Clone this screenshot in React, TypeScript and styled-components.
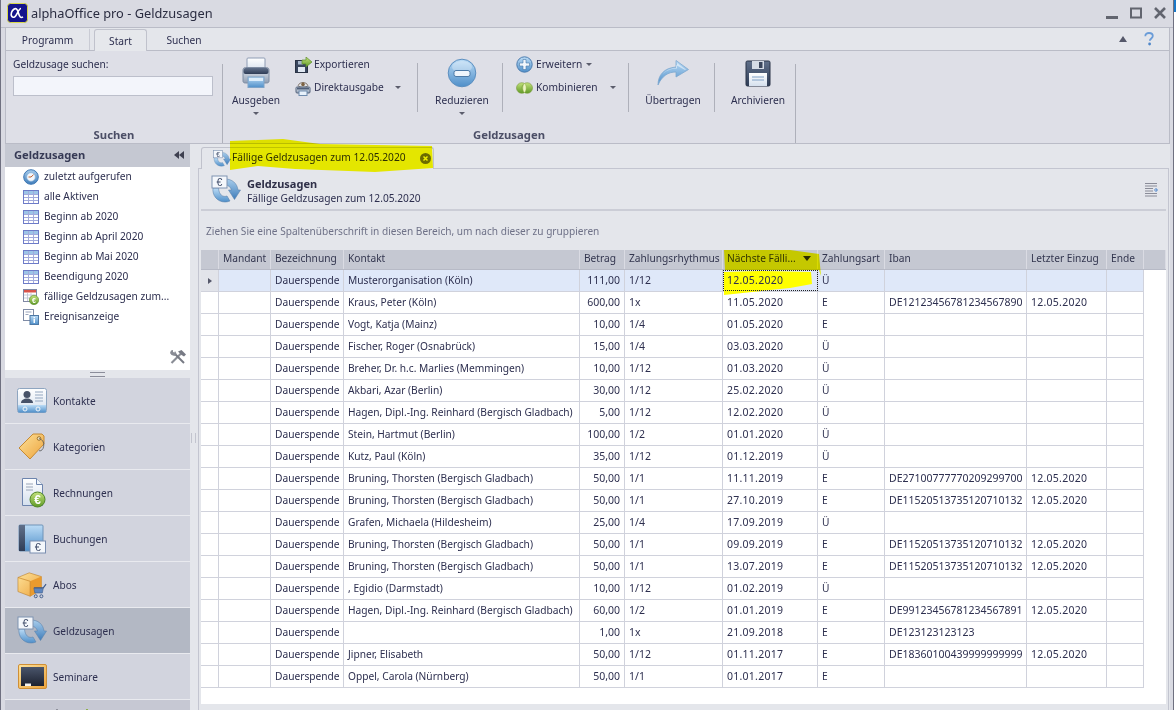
import React from "react";
import styled, { createGlobalStyle } from "styled-components";

const Global = createGlobalStyle`
  html, body { margin: 0; padding: 0; background: #fff; }
  #root { width: 1176px; height: 710px; overflow: hidden; }
  * { box-sizing: border-box; }
`;

const FONT = `"Noto Sans", "Liberation Sans", sans-serif`;
const INK = "#2d2f4f";

const Page = styled.div`
  position: relative;
  width: 1176px;
  height: 710px;
  overflow: hidden;
  display: flex;
  font-family: ${FONT};
  font-size: 10.2px;
  color: ${INK};
`;
const Win = styled.div`
  width: 1174px;
  height: 710px;
  background: #d9dae2;
  border-left: 1px solid #6f7080;
  border-right: 1px solid #6f7080;
  display: flex;
  flex-direction: column;
`;
const EdgeStrip = styled.div`
  width: 2px;
  background: linear-gradient(#1a78c8 0 12px, #fff 12px);
`;
const TitleBar = styled.div`
  height: 28px;
  flex: none;
  display: flex;
  align-items: center;
  padding: 0 7px 1px 6px;
  border-bottom: 1px solid #babcc7;
`;
const TitleText = styled.div`
  margin-left: 3px;
  font-size: 12.8px;
  color: #2a2c40;
  flex: 1;
`;
const WinControls = styled.div`
  display: flex;
  align-items: center;
  gap: 12px;
`;
const TabsBar = styled.div`
  height: 23px;
  flex: none;
  margin: 0 3px 0 4px;
  background: #e4e6eb;
  border-left: 1px solid #babcc7;
  border-right: 1px solid #babcc7;
  border-bottom: 1px solid #babcc7;
  display: flex;
  align-items: flex-end;
`;
const RibbonTab = styled.div<{ $w: number; $active?: boolean; $sep?: boolean }>`
  width: ${(p) => p.$w}px;
  height: ${(p) => (p.$active ? 22 : 21)}px;
  margin-bottom: ${(p) => (p.$active ? -1 : 0)}px;
  display: flex;
  align-items: center;
  justify-content: center;
  background: ${(p) => (p.$active ? "#e6e8ec" : "transparent")};
  border: ${(p) => (p.$active ? "1px solid #c0c2cc" : "none")};
  border-bottom: none;
  border-right: ${(p) => (p.$sep ? "1px solid #c9cbd4" : undefined)};
  border-radius: ${(p) => (p.$active ? "3px 3px 0 0" : "0")};
`;
const TabsRight = styled.div`
  margin-left: auto;
  align-self: center;
  display: flex;
  align-items: center;
  gap: 17px;
  padding-right: 15px;
`;
const Ribbon = styled.div`
  height: 93px;
  flex: none;
  margin: 0 3px 0 4px;
  background: #dedfe7;
  border-left: 1px solid #babcc7;
  border-right: 1px solid #babcc7;
  border-bottom: 1px solid #babcc7;
  display: flex;
`;
const Group = styled.div<{ $w: number }>`
  width: ${(p) => p.$w}px;
  flex: none;
  height: 92px;
  display: flex;
  flex-direction: column;
`;
const GroupEdge = styled.div`
  width: 1px;
  flex: none;
  height: 79px;
  margin-top: 13px;
  background: #aeb0ba;
`;
const GroupBody = styled.div`
  flex: 1;
  display: flex;
  min-height: 0;
`;
const GroupTitle = styled.div`
  height: 18px;
  flex: none;
  padding-top: 2px;
  text-align: center;
  font-weight: 700;
  color: #4b4e66;
  font-size: 11.3px;
  line-height: 16px;
`;
const SearchBody = styled.div`
  padding: 6px 7px 0;
  display: flex;
  flex-direction: column;
`;
const SearchLabel = styled.div`
  height: 15px;
  line-height: 15px;
`;
const SearchInput = styled.div`
  margin-top: 4px;
  width: 200px;
  height: 20px;
  background: #f3f5fb;
  border: 1px solid #bcbfcb;
`;
const BigButton = styled.div<{ $w: number; $pl?: number }>`
  width: ${(p) => p.$w}px;
  flex: none;
  padding-left: ${(p) => p.$pl ?? 0}px;
  display: flex;
  flex-direction: column;
  align-items: center;
  padding-top: 5px;
`;
const BigIcon = styled.div`
  height: 34px;
  display: flex;
  align-items: center;
  justify-content: center;
`;
const BigLabel = styled.div`
  margin-top: 2px;
  height: 16px;
  line-height: 16px;
  white-space: nowrap;
`;
const Caret = styled.span<{ $ml?: number; $dark?: boolean }>`
  display: inline-block;
  width: 0;
  height: 0;
  border-left: 3px solid transparent;
  border-right: 3px solid transparent;
  border-top: 3px solid ${(p) => (p.$dark ? "#2b2b30" : "#5b5d6c")};
  margin-left: ${(p) => p.$ml ?? 0}px;
`;
const BigCaret = styled(Caret)`
  margin-top: 4px;
`;
const SortCaret = styled.span`
  width: 0;
  height: 0;
  margin-right: 6px;
  border-left: 4px solid transparent;
  border-right: 4px solid transparent;
  border-top: 5px solid #2b2b30;
`;
const SmallColumn = styled.div<{ $w: number; $pl: number }>`
  width: ${(p) => p.$w}px;
  flex: none;
  padding-left: ${(p) => p.$pl}px;
  padding-top: 2px;
  display: flex;
  flex-direction: column;
`;
const SmallButton = styled.div<{ $gap: number }>`
  height: 23px;
  display: flex;
  align-items: center;
  white-space: nowrap;
  gap: ${(p) => p.$gap}px;
`;
const SmallLabel = styled.span`
  margin-bottom: 2px;
`;
const VSep = styled.div`
  width: 1px;
  flex: none;
  height: 49px;
  margin-top: 12px;
  background: #aeb0ba;
`;
const Content = styled.div`
  flex: 1;
  min-height: 0;
  margin: 0 3px 0 4px;
  display: flex;
`;
const Sidebar = styled.div`
  width: 185px;
  flex: none;
  background: #e4e6eb;
  display: flex;
  flex-direction: column;
  height: 566px;
  overflow: hidden;
`;
const SideHeader = styled.div`
  height: 23px;
  flex: none;
  background: #c5c8d2;
  display: flex;
  align-items: center;
  justify-content: space-between;
  padding: 0 6px 2px 9px;
  font-weight: 700;
  color: #363a55;
  font-size: 11.2px;
`;
const SideList = styled.div`
  height: 203px;
  flex: none;
  background: #fff;
  position: relative;
`;
const SideItem = styled.div`
  height: 20px;
  display: flex;
  align-items: center;
  padding-left: 18px;
  gap: 5px;
  white-space: nowrap;
`;
const SideLabel = styled.span`
  margin-bottom: 2px;
`;
const ToolsCorner = styled.div`
  position: absolute;
  right: 4px;
  bottom: 6px;
  line-height: 0;
`;
const Grip = styled.div`
  height: 8px;
  flex: none;
  display: flex;
  align-items: center;
  justify-content: center;
  &::before {
    content: "";
    width: 15px;
    height: 3px;
    border-top: 1px solid #8b8d9a;
    border-bottom: 1px solid #8b8d9a;
  }
`;
const NavItem = styled.div<{ $active?: boolean }>`
  height: 46px;
  flex: none;
  display: flex;
  align-items: center;
  padding-left: 12px;
  gap: 6px;
  background: ${(p) => (p.$active ? "#b3b8c4" : "#d2d4de")};
  border-bottom: 1px solid #e9eaef;
  font-size: 10.1px;
`;
const NavTail = styled.div`
  height: 11px;
  flex: none;
  background: #c6c8d3;
  padding: 8px 0 0 51px;
  line-height: 0;
`;
const NavIconBox = styled.div`
  width: 30px;
  height: 30px;
  display: flex;
  align-items: center;
  justify-content: center;
`;
const Splitter = styled.div`
  width: 7px;
  flex: none;
  background: #e4e6eb;
  display: flex;
  justify-content: center;
  &::before {
    content: "";
    margin-top: 289px;
    width: 3px;
    height: 10px;
    border-left: 1px solid #c2c4ce;
    border-right: 1px solid #c2c4ce;
  }
`;
const Main = styled.div`
  flex: 1;
  background: #e4e6eb;
  display: flex;
  flex-direction: column;
  min-width: 0;
  height: 566px;
`;
const DocStrip = styled.div`
  height: 24px;
  flex: none;
  padding: 3px 0 0 4px;
  position: relative;
  z-index: 1;
`;
const DocTab = styled.div`
  width: 233px;
  height: 22px;
  background: #e4e6eb;
  border: 1px solid #c0c2cc;
  border-bottom: none;
  border-radius: 3px 3px 0 0;
  display: flex;
  align-items: center;
  padding-left: 11px;
  white-space: nowrap;
`;
const DocTabText = styled.span`
  margin: 0 0 3px 1px;
  flex: 1;
`;
const DocClose = styled.span`
  width: 11px;
  height: 11px;
  margin-right: 2px;
  line-height: 0;
`;
const Panel = styled.div`
  flex: 1;
  margin: 0 1px;
  border: 1px solid #c3c5d0;
  border-bottom: none;
  padding: 2px 2px 0;
  display: flex;
  flex-direction: column;
  min-height: 0;
`;
const PanelHead = styled.div`
  height: 38px;
  flex: none;
  display: flex;
  align-items: center;
  padding: 0 8px 0 10px;
`;
const PanelHeadText = styled.div`
  margin-left: 6px;
  padding-top: 2px;
  flex: 1;
  line-height: 15px;
`;
const PanelTitle = styled.div`
  font-weight: 700;
  font-size: 11px;
  color: #2f3048;
`;
const GroupHint = styled.div`
  height: 41px;
  flex: none;
  border-top: 2px solid #cbcdd6;
  padding: 13px 0 0 5px;
  color: #6e7187;
  line-height: 15px;
  font-size: 10.1px;
`;
const Grid = styled.div`
  flex: none;
  height: 454px;
  background: #fff;
  display: flex;
  flex-direction: column;
`;
const COLS = "18px 52px 73px 236px 45px 98px 95px 67px 142px 80px 37px";
const HeadRow = styled.div`
  height: 20px;
  flex: none;
  display: grid;
  grid-template-columns: ${COLS} 1fr;
  background: #c5c8d2;
  border-bottom: 1px solid #b7bac6;
`;
const HeadCell = styled.div`
  border-right: 1px solid #dadbe3;
  padding: 0 0 2px 4px;
  line-height: 17px;
  white-space: nowrap;
  overflow: hidden;
  display: flex;
  align-items: center;
  justify-content: space-between;
  color: #33364f;
`;
const Row = styled.div<{ $selected?: boolean }>`
  height: 22px;
  flex: none;
  width: 943px;
  display: grid;
  grid-template-columns: ${COLS};
  background: ${(p) => (p.$selected ? "#dfe8f9" : "#fff")};
  border-bottom: 1px solid #d0d2dc;
  border-right: 1px solid #d0d2dc;
`;
const Cell = styled.div<{ $right?: boolean }>`
  border-right: 1px solid #d0d2dc;
  padding: 0 ${(p) => (p.$right ? 4 : 0)}px 0 4px;
  line-height: 20px;
  white-space: nowrap;
  overflow: hidden;
  text-align: ${(p) => (p.$right ? "right" : "left")};
`;
const NumCell = styled(Cell)`
  font-size: 10.5px;
`;
const DateCell = styled(Cell)<{ $focus?: boolean }>`
  font-size: 10.5px;
  letter-spacing: 0.25px;
  position: relative;
  z-index: ${(p) => (p.$focus ? 3 : "auto")};
  outline: ${(p) => (p.$focus ? "1px dotted #222" : "none")};
  outline-offset: -1px;
`;
const Indicator = styled.div<{ $selected?: boolean }>`
  border-right: 1px solid #d0d2dc;
  background: ${(p) => (p.$selected ? "#e2e4ea" : "#fff")};
  display: flex;
  align-items: center;
  justify-content: center;
  &::before {
    content: "";
    display: ${(p) => (p.$selected ? "block" : "none")};
    border-top: 3px solid transparent;
    border-bottom: 3px solid transparent;
    border-left: 4px solid #55586a;
  }
`;
const MarkerLayer = styled.svg<{ $blend?: boolean; $z: number }>`
  position: absolute;
  left: 0;
  top: 0;
  width: 1176px;
  height: 710px;
  pointer-events: none;
  z-index: ${(p) => p.$z};
  mix-blend-mode: ${(p) => (p.$blend ? "multiply" : "normal")};
`;
const DefsHolder = styled.svg`
  position: absolute;
  width: 0;
  height: 0;
`;

const Defs = () => (
  <DefsHolder aria-hidden>
    <defs>
      <linearGradient id="gBlue" x1="0" y1="0" x2="0" y2="1">
        <stop offset="0" stopColor="#bcdcf6" />
        <stop offset="1" stopColor="#4f8fc9" />
      </linearGradient>
      <linearGradient id="gBlueDeep" x1="0" y1="0" x2="0" y2="1">
        <stop offset="0" stopColor="#a8cdec" />
        <stop offset="1" stopColor="#3f7dba" />
      </linearGradient>
      <linearGradient id="gGreen" x1="0" y1="0" x2="0" y2="1">
        <stop offset="0" stopColor="#c4e27c" />
        <stop offset="1" stopColor="#5f9a26" />
      </linearGradient>
      <linearGradient id="gGold" x1="0" y1="0" x2="1" y2="1">
        <stop offset="0" stopColor="#fde29a" />
        <stop offset="1" stopColor="#eda33c" />
      </linearGradient>
      <linearGradient id="gNavy" x1="0" y1="0" x2="0" y2="1">
        <stop offset="0" stopColor="#60708a" />
        <stop offset="1" stopColor="#2f3d57" />
      </linearGradient>
      <linearGradient id="gPaper" x1="0" y1="0" x2="0" y2="1">
        <stop offset="0" stopColor="#ffffff" />
        <stop offset="1" stopColor="#d5e0ee" />
      </linearGradient>
      <linearGradient id="gSlate" x1="0" y1="0" x2="0" y2="1">
        <stop offset="0" stopColor="#e8edf4" />
        <stop offset="1" stopColor="#8f9db2" />
      </linearGradient>
      <linearGradient id="gBoard" x1="0" y1="0" x2="0" y2="1">
        <stop offset="0" stopColor="#4a556b" />
        <stop offset="1" stopColor="#1d2230" />
      </linearGradient>
    </defs>
  </DefsHolder>
);

const Logo = () => (
  <svg width="21" height="20" viewBox="0 0 21 20">
    <rect x="0.5" y="0.5" width="20" height="19" rx="3" fill="#14148c" stroke="#d8d84a" />
    <path d="M14 5.5c-2.5 0-4 7.5-6.5 8.5C5 15 3.5 12.5 4.5 9.5 5.5 6.5 8 5 9.5 6c1.8 1.2 1.8 6 3.8 8 .6.6 1.7.5 2.7-.2" fill="none" stroke="#fff" strokeWidth="1.6" />
  </svg>
);
const WinMin = () => (
  <svg width="12" height="14" viewBox="0 0 12 14"><rect x="0" y="10" width="12" height="3" fill="#62656f" /></svg>
);
const WinMax = () => (
  <svg width="12" height="12" viewBox="0 0 12 12"><rect x="1" y="1.5" width="10" height="9" fill="none" stroke="#62656f" strokeWidth="2" /></svg>
);
const WinClose = () => (
  <svg width="12" height="12" viewBox="0 0 12 12"><path d="M1 1l10 10M11 1L1 11" stroke="#62656f" strokeWidth="2.6" /></svg>
);
const CollapseUp = () => (
  <svg width="8" height="6" viewBox="0 0 8 6"><path d="M0 6L4 0l4 6z" fill="#55586a" /></svg>
);
const Help = () => (
  <svg width="10" height="14" viewBox="0 0 10 14">
    <path d="M1.3 4.2C1.3 2 3 1 5 1s3.800 1 3.800 3c0 2.300-3 2.600-3 4.800" fill="none" stroke="#6a9cd8" strokeWidth="1.800" />
    <circle cx="5.600" cy="12" r="1.400" fill="#4f86c8" />
  </svg>
);
const Printer = () => (
  <svg width="32" height="32" viewBox="0 0 32 32">
    <rect x="7" y="1" width="18" height="13" rx="1" fill="url(#gPaper)" stroke="#8e9cb4" />
    <path d="M3 13c0-1.500 1-2.500 2.500-2.500h21c1.500 0 2.500 1 2.500 2.500v11c0 1.500-1 2-2.500 2h-21C4 26 3 25.500 3 24z" fill="url(#gSlate)" stroke="#7f8da3" />
    <rect x="3.500" y="11" width="25" height="6" rx="2" fill="url(#gNavy)" />
    <rect x="8" y="20" width="16" height="10.500" fill="url(#gBlue)" stroke="#7ea3c8" />
    <rect x="9" y="21" width="14" height="3" fill="#dcedfb" />
  </svg>
);
const ExportIcon = () => (
  <svg width="17" height="16" viewBox="0 0 17 16">
    <rect x="0.500" y="3.500" width="12" height="12" fill="#39465e" stroke="#2a3345" />
    <rect x="3" y="10" width="7" height="5" fill="#dfe7f1" />
    <rect x="3" y="4" width="5" height="3.500" fill="#a9b8cc" />
    <path d="M7 3h4V0l6 5-6 5V7H7z" fill="url(#gGreen)" stroke="#5d8e2b" strokeWidth="0.700" />
  </svg>
);
const DirectIcon = () => (
  <svg width="16" height="16" viewBox="0 0 16 16">
    <path d="M3 5.500C5 1.500 11 1.500 13 5.500 11 8 5 8 3 5.500z" fill="#e2e4e8" stroke="#6c5c4c" strokeWidth="0.800" />
    <circle cx="8" cy="4.400" r="1.800" fill="#7d6242" />
    <rect x="1" y="7" width="14" height="6" rx="1" fill="url(#gSlate)" stroke="#55647d" />
    <rect x="2" y="7.500" width="12" height="2" fill="#4f5e79" />
    <rect x="4" y="11" width="8" height="4.500" fill="#e7f1fb" stroke="#6e8bad" />
  </svg>
);
const MinusCircle = () => (
  <svg width="30" height="30" viewBox="0 0 30 30">
    <circle cx="15" cy="15" r="13.800" fill="url(#gBlue)" stroke="#5c8fc0" />
    <ellipse cx="15" cy="9" rx="10" ry="6" fill="#fff" opacity="0.300" />
    <rect x="7" y="12.500" width="16" height="6" rx="2" fill="#eef5fc" stroke="#4d7aa7" />
  </svg>
);
const PlusCircle = () => (
  <svg width="17" height="17" viewBox="0 0 17 17">
    <circle cx="8.500" cy="8.500" r="7.700" fill="url(#gBlue)" stroke="#4d7db0" />
    <path d="M7 3.500h3V7h3.500v3H10v3.500H7V10H3.500V7H7z" fill="#f2f7fc" stroke="#4a78a8" strokeWidth="0.600" />
  </svg>
);
const Combine = () => (
  <svg width="17" height="12" viewBox="0 0 17 12">
    <circle cx="5.800" cy="6" r="5.300" fill="url(#gGreen)" stroke="#7b9a3c" strokeWidth="0.600" />
    <circle cx="11.200" cy="6" r="5.300" fill="url(#gGreen)" stroke="#7b9a3c" strokeWidth="0.600" />
    <path d="M8.500 1.300c2.300 2.500 2.300 6.900 0 9.400-2.300-2.500-2.300-6.900 0-9.400z" fill="#eef5c4" stroke="#8fae4a" strokeWidth="0.500" />
  </svg>
);
const Share = () => (
  <svg width="32" height="26" viewBox="0 0 32 26">
    <path d="M1 25C1 15 7 8 19 7V0.500L31.500 9.500 19 17v-5C11 12 5 16 1 25z" fill="url(#gBlue)" stroke="#7ea8cf" strokeWidth="0.800" />
    <path d="M3 19C6 12 11 9 20 8.500V3l9 6.500-1 .500L19 5v3C11 8.500 6 12 3 19z" fill="#fff" opacity="0.500" />
  </svg>
);
const Floppy = () => (
  <svg width="26" height="27" viewBox="0 0 26 27">
    <path d="M1 2.500C1 1.500 1.500 1 2.500 1h21c1 0 1.500.5 1.500 1.500v22c0 1-.5 1.500-1.500 1.500h-21c-1 0-1.500-.5-1.500-1.500z" fill="url(#gNavy)" stroke="#2a3448" />
    <rect x="7" y="1" width="12" height="8" fill="#d5dce6" />
    <rect x="14" y="2" width="3.500" height="6" fill="#3a465c" />
    <rect x="4" y="13" width="18" height="13" fill="url(#gPaper)" />
    <path d="M7 17h12M7 20h12" stroke="#7fa0c6" strokeWidth="1" />
  </svg>
);
const GridIcon = () => (
  <svg width="16" height="14" viewBox="0 0 16 14">
    <rect x="0.500" y="0.500" width="15" height="13" fill="#fff" stroke="#6d7bc8" />
    <rect x="1" y="1" width="14" height="3" fill="#9cc4e8" />
    <path d="M5.500 1v12M10.500 1v12M1 4.500h14M1 7.500h14M1 10.500h14" stroke="#a3abdc" strokeWidth="1" />
  </svg>
);
const ClockGlobe = () => (
  <svg width="16" height="16" viewBox="0 0 16 16">
    <circle cx="8" cy="8" r="7.300" fill="url(#gBlueDeep)" stroke="#3f78b4" />
    <circle cx="8" cy="8" r="4.300" fill="#f2f7fc" stroke="#8ab2d8" strokeWidth="0.700" />
    <path d="M8 8l2.500-2.300M8 8H5.500" stroke="#c06030" strokeWidth="1" />
  </svg>
);
const CalendarEuro = () => (
  <svg width="16" height="16" viewBox="0 0 16 16">
    <rect x="0.500" y="0.500" width="13" height="12" fill="#fff" stroke="#8088a4" />
    <rect x="1" y="1" width="12" height="2.500" fill="#d9534a" />
    <path d="M1 6h12M1 9h12M4.500 4v8M8 4v8" stroke="#b9bfd2" strokeWidth="0.800" />
    <circle cx="11" cy="11" r="4.700" fill="url(#gGreen)" stroke="#55862a" strokeWidth="0.600" />
    <text x="11" y="13.500" fontSize="7" fontFamily="Liberation Sans" fontWeight="700" textAnchor="middle" fill="#fff">€</text>
  </svg>
);
const EventIcon = () => (
  <svg width="16" height="16" viewBox="0 0 16 16">
    <rect x="0.500" y="0.500" width="10" height="11" fill="#fff" stroke="#7f8ba5" />
    <path d="M2.500 3h6M2.500 5.500h3" stroke="#9aa5bc" />
    <rect x="7" y="6.500" width="8.500" height="9" fill="url(#gBlue)" stroke="#4e79a6" />
    <rect x="10.500" y="8" width="1.500" height="1.300" fill="#fff" />
    <rect x="10.500" y="10" width="1.500" height="4" fill="#fff" />
  </svg>
);
const Tools = () => (
  <svg width="16" height="14" viewBox="0 0 16 14">
    <path d="M1.500 13L11 3.500" stroke="#8a8d96" strokeWidth="2.200" />
    <path d="M8 1.500L11.500 0 16 4.500 14 6.500 11.500 5 10 3.500z" fill="#777a84" />
    <path d="M14 13L5 4" stroke="#777a84" strokeWidth="2" />
    <path d="M1 .5L3 0 3 2 4.500 2.500 5 1 6.500 3.500 4.500 6 1.500 5 0 3z" fill="#8a8d96" />
  </svg>
);
const CollapseLeft = () => (
  <svg width="10" height="8" viewBox="0 0 10 8"><path d="M5 0L0 4l5 4zM10 0L5 4l5 4z" fill="#3e4050" /></svg>
);
const ContactIcon = () => (
  <svg width="30" height="25" viewBox="0 0 30 25">
    <rect x="0.500" y="0.500" width="29" height="24" rx="2" fill="url(#gPaper)" stroke="#8ea5c0" />
    <path d="M1 17h28v6c0 1-.5 1.500-1.500 1.500h-25C1.500 24.500 1 24 1 23z" fill="url(#gBlue)" />
    <circle cx="10" cy="6.500" r="3.500" fill="#475268" />
    <path d="M4 15c0-3 3-4.500 6-4.500s6 1.500 6 4.500z" fill="#475268" />
    <path d="M18 4h8M18 7h8M18 10h8M18 13h8" stroke="#93a6bf" strokeWidth="1" />
    <circle cx="8" cy="21" r="2" fill="none" stroke="#f2f6fa" />
    <circle cx="21" cy="21" r="2" fill="none" stroke="#f2f6fa" />
  </svg>
);
const TagIcon = () => (
  <svg width="28" height="27" viewBox="0 0 28 27">
    <path d="M1 15L15 1l9 0 2 2 0 8L12 26z" fill="url(#gGold)" stroke="#c58a34" />
    <circle cx="21" cy="5.500" r="1.800" fill="#f2e4c0" stroke="#9a7430" />
    <path d="M21 5.500c4 1 6 5 4 10-1 2-3 3-4 2" fill="none" stroke="#555" strokeWidth="0.800" />
  </svg>
);
const InvoiceIcon = () => (
  <svg width="27" height="30" viewBox="0 0 27 30">
    <path d="M3.500.5h14l6 6v21h-20z" fill="url(#gPaper)" stroke="#6d84ad" />
    <path d="M17.500.5v6h6" fill="#eef3f9" stroke="#6d84ad" />
    <path d="M7 6h7M7 9h7M7 12h7" stroke="#9aa5b8" />
    <circle cx="18.500" cy="21.500" r="7.500" fill="url(#gGreen)" stroke="#4f8526" />
    <text x="18.500" y="26" fontSize="12" fontFamily="Liberation Sans" fontWeight="700" textAnchor="middle" fill="#fff">€</text>
  </svg>
);
const BookIcon = () => (
  <svg width="28" height="30" viewBox="0 0 28 30">
    <rect x="1" y="1" width="24" height="26" rx="1" fill="url(#gBlue)" stroke="#6f93b8" />
    <rect x="1" y="1" width="6" height="26" fill="url(#gNavy)" />
    <rect x="12" y="17" width="15.500" height="12" fill="#f4f7fb" stroke="#7a8eb0" />
    <text x="19.700" y="27" fontSize="11" fontFamily="Liberation Sans" textAnchor="middle" fill="#3d4a68">€</text>
  </svg>
);
const BoxCartIcon = () => (
  <svg width="32" height="30" viewBox="0 0 32 30">
    <path d="M1 7l12-5 13 4v14l-12 7-13-5z" fill="url(#gGold)" stroke="#b77a24" strokeWidth="0.600" />
    <path d="M14 11L26 6v14l-12 7z" fill="#e99a2e" />
    <path d="M1 7l13 4v16" fill="none" stroke="#c98a30" strokeWidth="0.800" />
    <path d="M18 18h10l3-4" fill="none" stroke="#3d5a8a" strokeWidth="1.200" />
    <path d="M18 18.500h10l-1 5h-8z" fill="#5d86bf" stroke="#3d5a8a" strokeWidth="0.600" />
    <circle cx="20" cy="27" r="1.600" fill="none" stroke="#3d5a8a" />
    <circle cx="26" cy="27" r="1.600" fill="none" stroke="#3d5a8a" />
  </svg>
);
const RefundIcon = ({ size = 30 }: { size?: number }) => (
  <svg width={size} height={size} viewBox="0 0 30 30">
    <path d="M14 4c7 0 12 4 13 11h2.500l-6 9.500-6-9.500h3c-1-3-3-5-6.500-5z" fill="url(#gBlueDeep)" stroke="#5a83ac" strokeWidth="0.600" />
    <path d="M2 13c-1 7 4 14 12 14 2 0 3.500-.5 5-1l-3-5c-4 1.500-8-1-8.500-8z" fill="url(#gBlue)" stroke="#5a83ac" strokeWidth="0.600" />
    <rect x="1" y="1" width="15" height="12" fill="#f4f7fb" stroke="#7f93b2" />
    <text x="8.500" y="11" fontSize="10.500" fontFamily="Liberation Sans" textAnchor="middle" fill="#3d4a68">€</text>
  </svg>
);
const BoardIcon = () => (
  <svg width="29" height="25" viewBox="0 0 29 25">
    <rect x="0.500" y="0.500" width="28" height="24" rx="1.500" fill="url(#gGold)" stroke="#cf8f36" />
    <rect x="3" y="3" width="23" height="19" fill="url(#gBoard)" />
    <rect x="7" y="19.500" width="6" height="2.500" fill="#f2f2f2" />
  </svg>
);
const TailIconTips = () => (
  <svg width="32" height="3" viewBox="0 0 32 3">
    <rect x="0" y="0" width="2" height="3" fill="#8f919c" />
    <rect x="30" y="0" width="2" height="3" fill="#8cb04a" />
  </svg>
);
const ColumnsIcon = () => (
  <svg width="13" height="14" viewBox="0 0 13 14">
    <path d="M0 .5h12M0 3h12M0 5.500h8M0 8h8M0 10.500h12M0 13h12" stroke="#8a8c98" strokeWidth="1" />
    <path d="M9 7h3M10.500 5l2 2-2 2" fill="none" stroke="#4f86cc" strokeWidth="1" />
  </svg>
);
const CloseGlyph = () => (
  <svg width="11" height="11" viewBox="0 0 11 11">
    <circle cx="5.500" cy="5.500" r="5.500" fill="#6c6c6c" />
    <path d="M3.500 3.500l4 4M7.500 3.500l-4 4" stroke="#f0f0f0" strokeWidth="1.500" />
  </svg>
);

const sideItems: [React.ReactNode, string][] = [
  [<ClockGlobe />, "zuletzt aufgerufen"],
  [<GridIcon />, "alle Aktiven"],
  [<GridIcon />, "Beginn ab 2020"],
  [<GridIcon />, "Beginn ab April 2020"],
  [<GridIcon />, "Beginn ab Mai 2020"],
  [<GridIcon />, "Beendigung 2020"],
  [<CalendarEuro />, "fällige Geldzusagen zum..."],
  [<EventIcon />, "Ereignisanzeige"],
];
const navItems: [React.ReactNode, string][] = [
  [<ContactIcon />, "Kontakte"],
  [<TagIcon />, "Kategorien"],
  [<InvoiceIcon />, "Rechnungen"],
  [<BookIcon />, "Buchungen"],
  [<BoxCartIcon />, "Abos"],
  [<RefundIcon />, "Geldzusagen"],
  [<BoardIcon />, "Seminare"],
];

const headers = ["", "Mandant", "Bezeichnung", "Kontakt", "Betrag", "Zahlungsrhythmus", "Nächste Fälli...", "Zahlungsart", "Iban", "Letzter Einzug", "Ende"];
const B = "Bruning, Thorsten (Bergisch Gladbach)";
const H = "Hagen, Dipl.-Ing. Reinhard (Bergisch Gladbach)";
const rows: [string, string, string, string, string, string, string][] = [
  ["Musterorganisation (Köln)", "111,00", "1/12", "12.05.2020", "Ü", "", ""],
  ["Kraus, Peter (Köln)", "600,00", "1x", "11.05.2020", "E", "DE12123456781234567890", "12.05.2020"],
  ["Vogt, Katja (Mainz)", "10,00", "1/4", "01.05.2020", "E", "", ""],
  ["Fischer, Roger (Osnabrück)", "15,00", "1/4", "03.03.2020", "Ü", "", ""],
  ["Breher, Dr. h.c. Marlies (Memmingen)", "10,00", "1/12", "01.03.2020", "Ü", "", ""],
  ["Akbari, Azar (Berlin)", "30,00", "1/12", "25.02.2020", "Ü", "", ""],
  [H, "5,00", "1/12", "12.02.2020", "Ü", "", ""],
  ["Stein, Hartmut (Berlin)", "100,00", "1/2", "01.01.2020", "Ü", "", ""],
  ["Kutz, Paul (Köln)", "35,00", "1/12", "01.12.2019", "Ü", "", ""],
  [B, "50,00", "1/1", "11.11.2019", "E", "DE27100777770209299700", "12.05.2020"],
  [B, "50,00", "1/1", "27.10.2019", "E", "DE11520513735120710132", "12.05.2020"],
  ["Grafen, Michaela (Hildesheim)", "25,00", "1/4", "17.09.2019", "Ü", "", ""],
  [B, "50,00", "1/1", "09.09.2019", "E", "DE11520513735120710132", "12.05.2020"],
  [B, "50,00", "1/1", "13.07.2019", "E", "DE11520513735120710132", "12.05.2020"],
  [", Egidio (Darmstadt)", "10,00", "1/12", "01.02.2019", "Ü", "", ""],
  [H, "60,00", "1/2", "01.01.2019", "E", "DE99123456781234567891", "12.05.2020"],
  ["", "1,00", "1x", "21.09.2018", "E", "DE123123123123", ""],
  ["Jipner, Elisabeth", "50,00", "1/12", "01.11.2017", "E", "DE18360100439999999999", "12.05.2020"],
  ["Oppel, Carola (Nürnberg)", "50,00", "1/1", "01.01.2017", "E", "", ""],
];

export default function App() {
  return (
    <Page>
      <Global />
      <Defs />
      <Win>
        <TitleBar>
          <Logo />
          <TitleText>alphaOffice pro - Geldzusagen</TitleText>
          <WinControls>
            <WinMin />
            <WinMax />
            <WinClose />
          </WinControls>
        </TitleBar>
        <TabsBar>
          <RibbonTab $w={84} $sep>Programm</RibbonTab>
          <RibbonTab $w={4} />
          <RibbonTab $w={53} $active>Start</RibbonTab>
          <RibbonTab $w={74}>Suchen</RibbonTab>
          <TabsRight>
            <CollapseUp />
            <Help />
          </TabsRight>
        </TabsBar>
        <Ribbon>
          <Group $w={216}>
            <GroupBody>
              <SearchBody>
                <SearchLabel>Geldzusage suchen:</SearchLabel>
                <SearchInput />
              </SearchBody>
            </GroupBody>
            <GroupTitle>Suchen</GroupTitle>
          </Group>
          <GroupEdge />
          <Group $w={572}>
            <GroupBody>
              <BigButton $w={66}>
                <BigIcon><Printer /></BigIcon>
                <BigLabel>Ausgeben</BigLabel>
                <BigCaret />
              </BigButton>
              <SmallColumn $w={128} $pl={6}>
                <SmallButton $gap={2}><ExportIcon /><SmallLabel>Exportieren</SmallLabel></SmallButton>
                <SmallButton $gap={3}><DirectIcon /><SmallLabel>Direktausgabe</SmallLabel><Caret $ml={8} /></SmallButton>
              </SmallColumn>
              <VSep />
              <BigButton $w={84} $pl={4}>
                <BigIcon><MinusCircle /></BigIcon>
                <BigLabel>Reduzieren</BigLabel>
                <BigCaret />
              </BigButton>
              <VSep />
              <SmallColumn $w={125} $pl={13}>
                <SmallButton $gap={3}><PlusCircle /><SmallLabel>Erweitern</SmallLabel><Caret $ml={1} /></SmallButton>
                <SmallButton $gap={3}><Combine /><SmallLabel>Kombinieren</SmallLabel><Caret $ml={9} /></SmallButton>
              </SmallColumn>
              <VSep />
              <BigButton $w={85} $pl={3}>
                <BigIcon><Share /></BigIcon>
                <BigLabel>Übertragen</BigLabel>
              </BigButton>
              <VSep />
              <BigButton $w={80} $pl={6}>
                <BigIcon><Floppy /></BigIcon>
                <BigLabel>Archivieren</BigLabel>
              </BigButton>
            </GroupBody>
            <GroupTitle>Geldzusagen</GroupTitle>
          </Group>
          <GroupEdge />
        </Ribbon>
        <Content>
          <Sidebar>
            <SideHeader>
              Geldzusagen
              <CollapseLeft />
            </SideHeader>
            <SideList>
              {sideItems.map(([icon, label]) => (
                <SideItem key={label}>{icon}<SideLabel>{label}</SideLabel></SideItem>
              ))}
              <ToolsCorner><Tools /></ToolsCorner>
            </SideList>
            <Grip />
            {navItems.map(([icon, label]) => (
              <NavItem key={label} $active={label === "Geldzusagen"}>
                <NavIconBox>{icon}</NavIconBox>
                {label}
              </NavItem>
            ))}
            <NavTail><TailIconTips /></NavTail>
          </Sidebar>
          <Splitter />
          <Main>
            <DocStrip>
              <DocTab>
                <RefundIcon size={18} />
                <DocTabText>Fällige Geldzusagen zum 12.05.2020</DocTabText>
                <DocClose><CloseGlyph /></DocClose>
              </DocTab>
            </DocStrip>
            <Panel>
              <PanelHead>
                <RefundIcon />
                <PanelHeadText>
                  <PanelTitle>Geldzusagen</PanelTitle>
                  Fällige Geldzusagen zum 12.05.2020
                </PanelHeadText>
                <ColumnsIcon />
              </PanelHead>
              <GroupHint>Ziehen Sie eine Spaltenüberschrift in diesen Bereich, um nach dieser zu gruppieren</GroupHint>
              <Grid>
                <HeadRow>
                  {headers.map((h, i) => (
                    <HeadCell key={i}>
                      {h}
                      {i === 6 && <SortCaret />}
                    </HeadCell>
                  ))}
                  <HeadCell />
                </HeadRow>
                {rows.map((r, i) => (
                  <Row key={i} $selected={i === 0}>
                    <Indicator $selected={i === 0} />
                    <Cell />
                    <Cell>Dauerspende</Cell>
                    <Cell>{r[0]}</Cell>
                    <NumCell $right>{r[1]}</NumCell>
                    <NumCell>{r[2]}</NumCell>
                    <DateCell $focus={i === 0}>{r[3]}</DateCell>
                    <Cell>{r[4]}</Cell>
                    <NumCell>{r[5]}</NumCell>
                    <DateCell>{r[6]}</DateCell>
                    <Cell />
                  </Row>
                ))}
              </Grid>
            </Panel>
          </Main>
        </Content>
      </Win>
      <EdgeStrip />
      <MarkerLayer $blend $z={5} viewBox="0 0 1176 710">
        <path d="M230 141 L258 140 L283 139 L320 144 L432 146 L433 168 L375 172 L295 169 L258 166 L230 170 Z" fill="#ffff00" />
        <path d="M724 250 L790 250 L819 254 L821 276 L819 270 L725 270 Z" fill="#ffff00" />
      </MarkerLayer>
      <MarkerLayer $z={2} viewBox="0 0 1176 710">
        <path d="M724 272 L760 271 L811 272 L812 284 L790 288 L770 290 L724 295 Z" fill="#ffff00" />
      </MarkerLayer>
    </Page>
  );
}
